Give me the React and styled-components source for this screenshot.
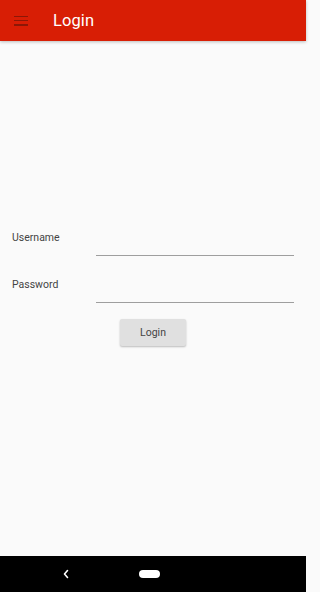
import styled, { createGlobalStyle } from "styled-components";

const GlobalStyle = createGlobalStyle`
  html, body {
    margin: 0;
    padding: 0;
    height: 100%;
  }
  body {
    font-family: Roboto, "Liberation Sans", sans-serif;
    background: #fafafa;
  }
  #root {
    height: 100%;
  }
`;

const StyledApp = styled.div`
  height: 100vh;
  max-width: 306px;
  display: flex;
  flex-direction: column;
  background: #fafafa;
`;

const StyledHeader = styled.header`
  height: 41px;
  flex-shrink: 0;
  background: #d81e05;
  display: flex;
  align-items: center;
  padding-left: 14px;
  gap: 25px;
  box-shadow: 0 1px 3px rgba(0, 0, 0, 0.25);
  position: relative;
  z-index: 1;
`;

const StyledMenuButton = styled.div`
  width: 14px;
  height: 10px;
  display: flex;
  flex-direction: column;
  justify-content: space-between;

  & > span {
    display: block;
    height: 1.5px;
    background: #8c1707;
  }
`;

const StyledTitle = styled.h1`
  margin: 0;
  color: #ffffff;
  font-size: 16.5px;
  font-weight: 400;
  letter-spacing: 0.1px;
`;

const StyledMain = styled.main`
  flex: 1;
  display: flex;
  flex-direction: column;
  padding-top: 184px;
`;

const StyledForm = styled.form`
  display: flex;
  flex-direction: column;
  gap: 15px;
`;

const StyledRow = styled.div`
  display: flex;
  align-items: flex-start;
  padding: 0 12px;
  height: 32px;
`;

const StyledLabel = styled.label`
  width: 84px;
  flex-shrink: 0;
  font-size: 10.5px;
  color: #444444;
  line-height: 14px;
  padding-top: 6px;
`;

const StyledInput = styled.input`
  flex: 1;
  min-width: 0;
  width: 0;
  height: 31px;
  border: none;
  border-bottom: 1px solid #9e9e9e;
  background: transparent;
  outline: none;
  font-family: inherit;
  font-size: 12px;
  padding: 0;
  box-sizing: border-box;
`;

const StyledButtonRow = styled.div`
  display: flex;
  justify-content: center;
`;

const StyledButton = styled.button`
  width: 66px;
  height: 27px;
  border: none;
  border-radius: 2px;
  background: #e0e0e0;
  color: #444444;
  font-family: inherit;
  font-size: 10.5px;
  box-shadow: 0 1px 2px rgba(0, 0, 0, 0.25);
`;

const StyledNavBar = styled.div`
  height: 36px;
  flex-shrink: 0;
  background: #000000;
  display: flex;
  align-items: center;
  padding-left: 62px;
  gap: 69px;
`;

const StyledHomePill = styled.div`
  width: 21px;
  height: 8px;
  border-radius: 4px;
  background: #ffffff;
`;

function App() {
  return (
    <StyledApp>
      <GlobalStyle />
      <StyledHeader>
        <StyledMenuButton>
          <span />
          <span />
          <span />
        </StyledMenuButton>
        <StyledTitle>Login</StyledTitle>
      </StyledHeader>
      <StyledMain>
        <StyledForm onSubmit={(e) => e.preventDefault()}>
          <StyledRow>
            <StyledLabel htmlFor="username">Username</StyledLabel>
            <StyledInput id="username" type="text" />
          </StyledRow>
          <StyledRow>
            <StyledLabel htmlFor="password">Password</StyledLabel>
            <StyledInput id="password" type="password" />
          </StyledRow>
          <StyledButtonRow>
            <StyledButton type="submit">Login</StyledButton>
          </StyledButtonRow>
        </StyledForm>
      </StyledMain>
      <StyledNavBar>
        <svg width="8" height="10" viewBox="0 0 8 10">
          <path
            d="M5.5 1.5 L2.5 5 L5.5 8.5"
            fill="none"
            stroke="#ffffff"
            strokeWidth="1.6"
            strokeLinecap="round"
            strokeLinejoin="round"
          />
        </svg>
        <StyledHomePill />
      </StyledNavBar>
    </StyledApp>
  );
}

export default App;
